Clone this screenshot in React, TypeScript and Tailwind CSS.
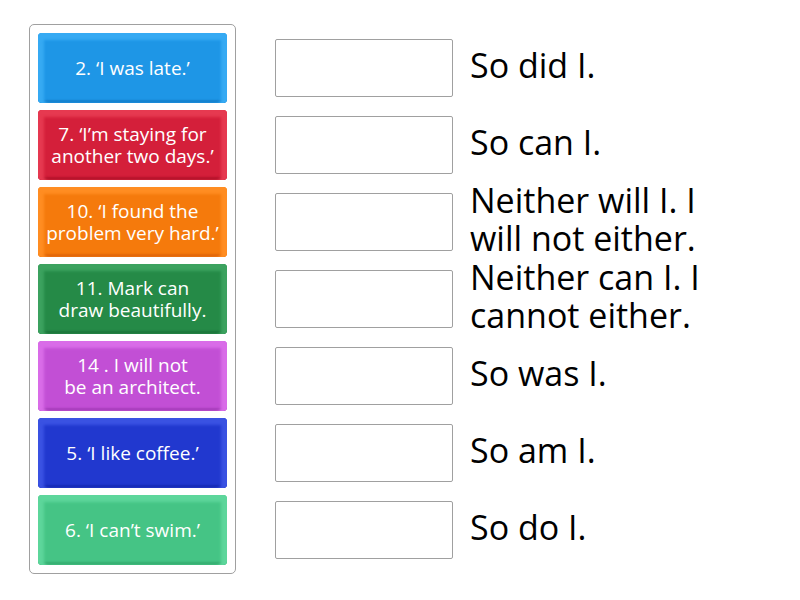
const tiles = [
  { text: ["2. \u2018I was late.\u2019"], cls: "bg-[#1e96e6] shadow-[inset_0_8px_3px_-1px_#36aaf3,inset_7px_0_3px_-1px_#36aaf3,inset_-7px_0_3px_-1px_#36aaf3,inset_0_-4px_2px_-1px_#1380cc]" },
  { text: ["7. \u2018I\u2019m staying for", "another two days.\u2019"], cls: "bg-[#d41f3a] shadow-[inset_0_8px_3px_-1px_#e63950,inset_7px_0_3px_-1px_#e63950,inset_-7px_0_3px_-1px_#e63950,inset_0_-4px_2px_-1px_#b5122a]" },
  { text: ["10. \u2018I found the", "problem very hard.\u2019"], cls: "bg-[#f57a0c] shadow-[inset_0_8px_3px_-1px_#ff8d22,inset_7px_0_3px_-1px_#ff8d22,inset_-7px_0_3px_-1px_#ff8d22,inset_0_-4px_2px_-1px_#e0660a]" },
  { text: ["11. Mark can", "draw beautifully."], cls: "bg-[#258a47] shadow-[inset_0_8px_3px_-1px_#3ca25f,inset_7px_0_3px_-1px_#3ca25f,inset_-7px_0_3px_-1px_#3ca25f,inset_0_-4px_2px_-1px_#1b753b]" },
  { text: ["14 . I will not", "be an architect."], cls: "bg-[#c24fd5] shadow-[inset_0_8px_3px_-1px_#d96ce8,inset_7px_0_3px_-1px_#d96ce8,inset_-7px_0_3px_-1px_#d96ce8,inset_0_-4px_2px_-1px_#a63dba]" },
  { text: ["5. \u2018I like coffee.\u2019"], cls: "bg-[#2138cf] shadow-[inset_0_8px_3px_-1px_#3a52e2,inset_7px_0_3px_-1px_#3a52e2,inset_-7px_0_3px_-1px_#3a52e2,inset_0_-4px_2px_-1px_#172bb5]" },
  { text: ["6. \u2018I can\u2019t swim.\u2019"], cls: "bg-[#45c485] shadow-[inset_0_8px_3px_-1px_#5dd69b,inset_7px_0_3px_-1px_#5dd69b,inset_-7px_0_3px_-1px_#5dd69b,inset_0_-4px_2px_-1px_#35ad70]" },
];

const answers = [
  ["So did I."],
  ["So can I."],
  ["Neither will I. I", "will not either."],
  ["Neither can I. I", "cannot either."],
  ["So was I."],
  ["So am I."],
  ["So do I."],
];

export default function App() {
  return (
    <div className="w-[800px] h-[600px] bg-white flex font-['Open_Sans',sans-serif]">
      <div className="ml-[29px] mt-[24px] self-start w-[207px] border border-[#a0a0a0] rounded-[5px] p-2 flex flex-col gap-[7px]">
        {tiles.map((t, i) => (
          <div
            key={i}
            className={`h-[70px] rounded-[4px] flex flex-col items-center justify-center text-white text-[19px] leading-[22px] text-center -space-y-0 ${t.cls}`}
          >
            {t.text.map((line) => (
              <span key={line} className="whitespace-nowrap">{line}</span>
            ))}
          </div>
        ))}
      </div>

      <div className="ml-[39px] mt-[33px] flex flex-col gap-[7px]">
        {answers.map((a, i) => (
          <div key={i} className="h-[70px] flex items-center">
            <div className="w-[178px] h-[58px] border border-[#a0a0a0] rounded-[2px] bg-white shrink-0" />
            <div className="ml-[17px] -mt-[7px] text-[34px] leading-[38px] text-black flex flex-col">
              {a.map((line) => (
                <span key={line} className="whitespace-nowrap">{line}</span>
              ))}
            </div>
          </div>
        ))}
      </div>
    </div>
  );
}
